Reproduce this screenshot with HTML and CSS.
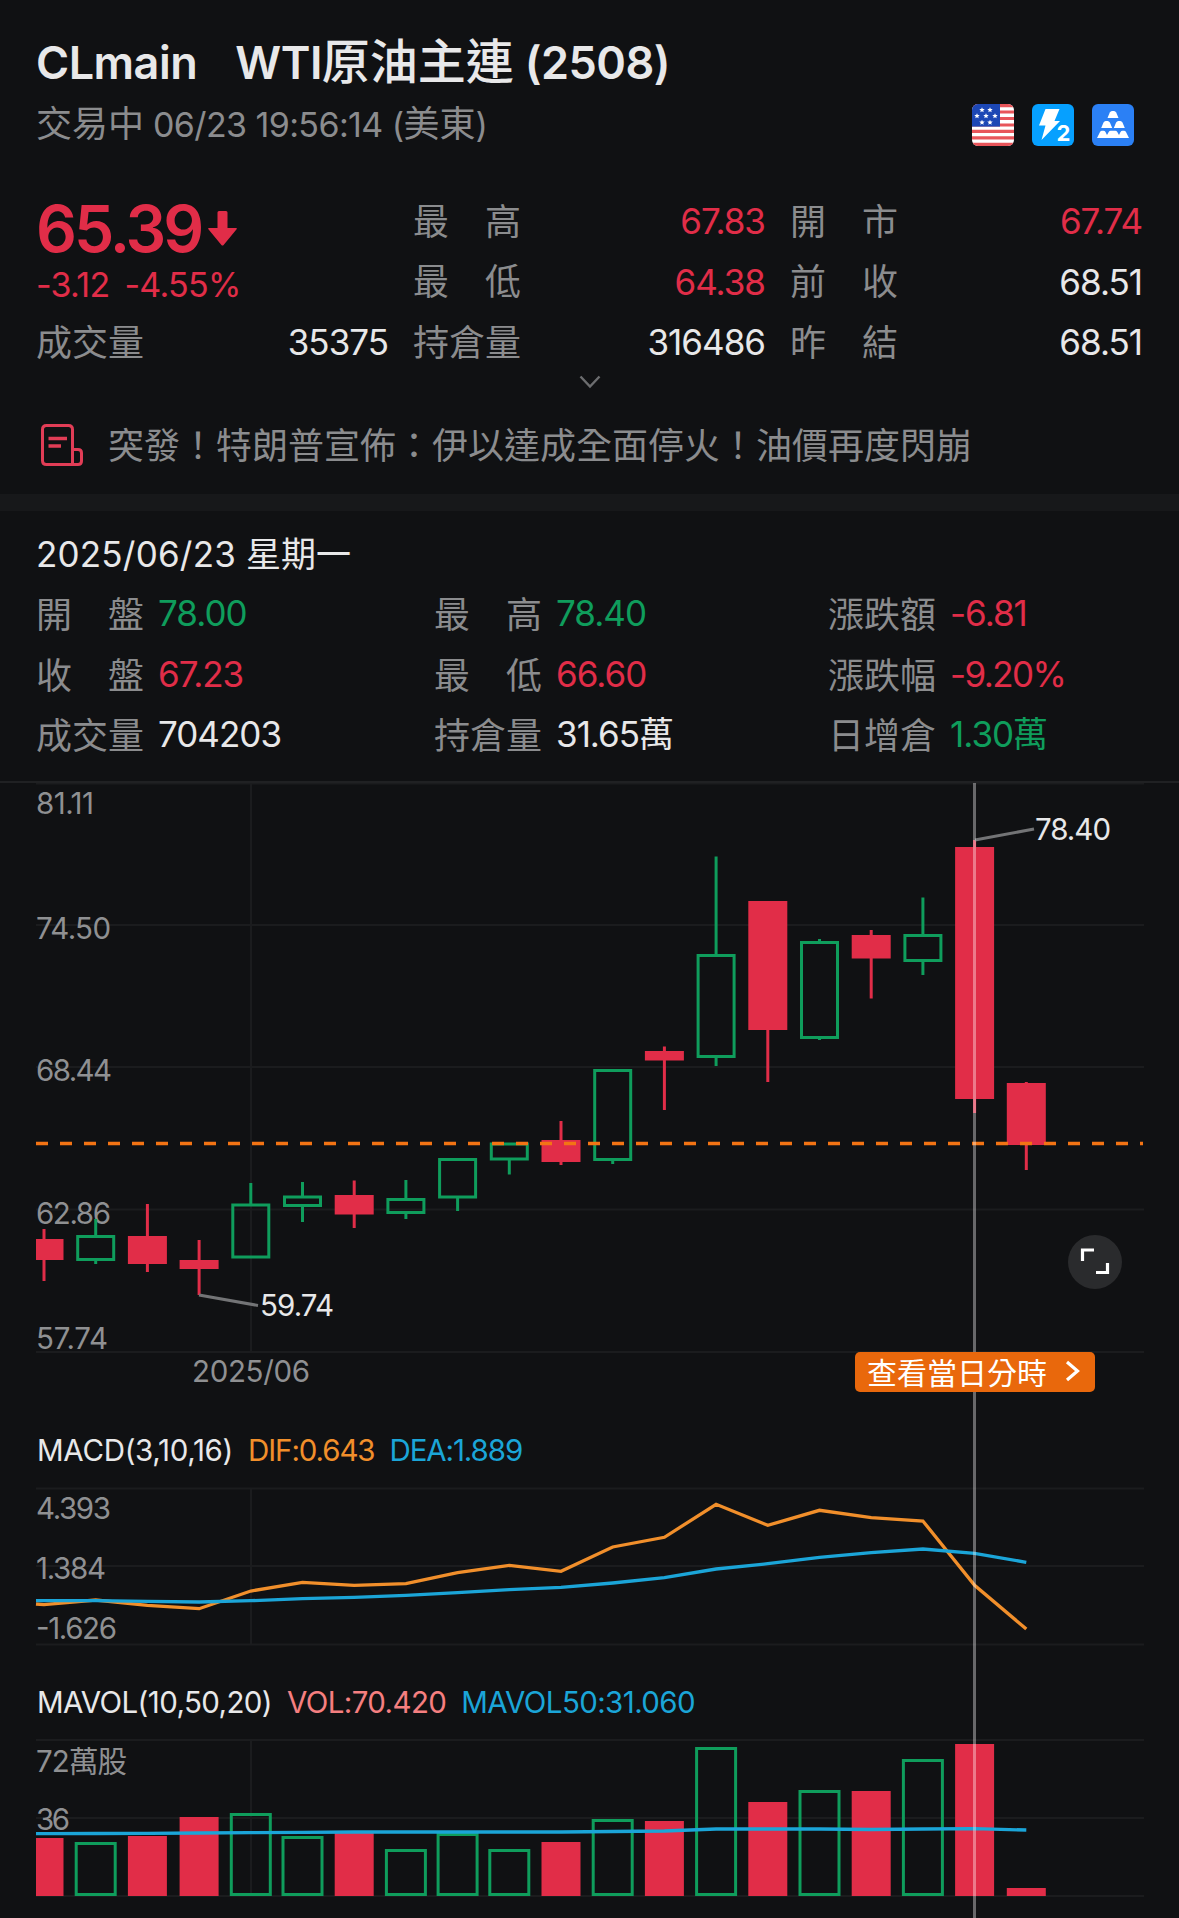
FILE: index.html
```html
<!DOCTYPE html>
<html lang="zh-Hant">
<head>
    <meta charset="UTF-8">
    <meta name="viewport" content="width=device-width, initial-scale=1.0">
    <title>CLmain WTI原油主連</title>
    <link rel="stylesheet" href="styles.css">
</head>
<body>

    <header>
        <h1><span>CLmain</span><span>WTI<b>原油主連</b> (2508)</span></h1>
        <div class="status">
            <p><b>交易中</b> 06/23 19:56:14 (<b>美東</b>)</p>
            <div class="badges">
                <svg viewBox="0 0 42 42">
                    <clipPath id="round"><rect width="42" height="42" rx="6"/></clipPath>
                    <g clip-path="url(#round)">
                        <rect width="42" height="42" fill="#fff"/>
                        <path d="M0 1.6h42M0 8h42M0 14.5h42M0 21h42M0 27.4h42M0 33.9h42M0 40.4h42" stroke="#e8555a" stroke-width="3.2"/>
                        <rect width="28" height="22.6" fill="#1c47b5"/>
                        <g id="stars" fill="#fff"></g>
                    </g>
                </svg>
                <svg viewBox="0 0 42 42">
                    <rect width="42" height="42" rx="6" fill="#06a0ff"/>
                    <path d="M13.5 5h14l-5 12h5.500L9.500 36l4-14.500H7z" fill="#fff"/>
                    <text x="24.500" y="37" class="lv2">2</text>
                </svg>
                <svg viewBox="0 0 42 42">
                    <rect width="42" height="42" rx="6" fill="#2b80f5"/>
                    <g fill="#fff">
                        <path d="M15.500 14l2.300-5.500q.8-1.500 2.200-1.500h2q1.400 0 2.200 1.500l2.300 5.500z"/>
                        <path d="M9.200 24l2.300-5.500q.8-1.500 2.200-1.500h2q1.400 0 2.200 1.500l2.300 5.500zM21.800 24l2.300-5.500q.8-1.500 2.200-1.500h2q1.400 0 2.200 1.500l2.300 5.500z"/>
                        <path d="M5 34l3-6q.7-1.300 2-1.300h1.500q1.300 0 2 1.300l1.500 3 1.700-3q.7-1.300 2-1.300h4.600q1.300 0 2 1.300l1.700 3 1.500-3q.7-1.300 2-1.300H32q1.300 0 2 1.300l3 6z"/>
                    </g>
                </svg>
            </div>
        </div>
    </header>

    <section class="quote">
        <div class="price">
            <div class="last">65.39
                <svg viewBox="0 0 29 36"><path d="M11 1h7q1.500 0 1.500 1.500V18H28q1.500 0 .6 1.300L15.600 35q-1.100 1-2.200 0L.4 19.300Q-.5 18 1 18h8.500V2.500Q9.500 1 11 1z" fill="#e12d48"/></svg>
            </div>
            <div class="change"><span>-3.12</span><span>-4.55%</span></div>
        </div>
        <div class="cell"><b>最　高</b><span class="red">67.83</span></div>
        <div class="cell"><b>開　市</b><span class="red">67.74</span></div>
        <div class="cell"><b>最　低</b><span class="red">64.38</span></div>
        <div class="cell"><b>前　收</b><span>68.51</span></div>
        <div class="cell"><b>成交量</b><span>35375</span></div>
        <div class="cell"><b>持倉量</b><span>316486</span></div>
        <div class="cell"><b>昨　結</b><span>68.51</span></div>
    </section>
    <div class="more">
        <svg viewBox="0 0 22 14"><path d="M1.500 1.500L11 11.500l9.500-10" fill="none" stroke="#6c6d6f" stroke-width="2.400"/></svg>
    </div>

    <div class="news">
        <svg viewBox="0 0 44 44" fill="none" stroke="#e23d56" stroke-width="3">
            <path d="M32.500 41.500H6.500q-4 0-4-4v-31q0-4 4-4h22q4 0 4 4z"/>
            <path d="M32.500 26.500H38q3.500 0 3.500 3.500v8q0 3.500-3.500 3.500h-5.500"/>
            <path d="M8.500 15.500H27M8.500 23H21" stroke-width="3.600"/>
        </svg>
        <b>突發！特朗普宣佈：伊以達成全面停火！油價再度閃崩</b>
    </div>

    <section class="detail">
        <h2>2025/06/23 <b>星期一</b></h2>
        <div class="grid">
            <div><b>開　盤</b><span class="green">78.00</span></div>
            <div><b>最　高</b><span class="green">78.40</span></div>
            <div><b>漲跌額</b><span class="red">-6.81</span></div>
            <div><b>收　盤</b><span class="red">67.23</span></div>
            <div><b>最　低</b><span class="red">66.60</span></div>
            <div><b>漲跌幅</b><span class="red percent">-9.20%</span></div>
            <div><b>成交量</b><span>704203</span></div>
            <div><b>持倉量</b><span>31.65<i>萬</i></span></div>
            <div><b>日增倉</b><span class="green">1.30<i>萬</i></span></div>
        </div>
    </section>

    <section class="charts">
        <svg id="kline" class="kline" viewBox="0 783 1179 637"></svg>
        <p class="legend macd-legend"><span>MACD(3,10,16)</span><span class="orange">DIF:0.643</span><span class="blue">DEA:1.889</span></p>
        <svg id="macd" class="macd" viewBox="0 1480 1179 180"></svg>
        <p class="legend vol-legend"><span>MAVOL(10,50,20)</span><span class="pink">VOL:70.420</span><span class="blue">MAVOL50:31.060</span></p>
        <svg id="vol" class="vol" viewBox="0 1732 1179 186"></svg>

        <div class="cross"></div>
        <button class="intraday">查看當日分時
            <svg viewBox="0 0 16 22"><path d="M2 2l10.500 9L2 20" fill="none" stroke="#fff" stroke-width="3.200"/></svg>
        </button>
        <button class="full">
            <svg viewBox="0 0 54 54"><path d="M14.500 26V15H26M28 37.500h11.500V28" fill="none" stroke="#fff" stroke-width="3.200"/></svg>
        </button>
    </section>

    <script>
        const RED = '#e12d48';
        const GREEN = '#0f9d5c';
        const xAt = i => 44 + i * 51.7;

        // one row per day: up/down, high, body top, body bottom, low
        const candles = [
            [0, 1229, 1239, 1260, 1281],
            [1, 1219, 1235, 1261, 1264],
            [0, 1204, 1236, 1264, 1272],
            [0, 1240, 1260, 1269, 1295],
            [1, 1183, 1203.500, 1258.500, 1258],
            [1, 1182, 1195.500, 1207, 1222],
            [0, 1180.500, 1195, 1214.500, 1228],
            [1, 1180, 1198, 1214, 1219],
            [1, 1159, 1158, 1198.500, 1211],
            [1, 1144, 1142.500, 1160.500, 1174.500],
            [0, 1121, 1140, 1162, 1165],
            [1, 1070, 1069, 1161, 1164],
            [0, 1046.500, 1051, 1060.500, 1110],
            [1, 856.500, 954, 1058, 1066],
            [0, 901, 901, 1030, 1082],
            [1, 939, 941, 1039, 1040],
            [0, 930, 935, 958.500, 998.500],
            [1, 897.500, 934, 962, 975],
            [0, 840, 847, 1099, 1113],
            [0, 1082, 1083, 1145, 1170]
        ];
        const volTop = [1838, 1842, 1836, 1817, 1813, 1836, 1832.500, 1849, 1833, 1849, 1842, 1819, 1821, 1747, 1802, 1790, 1791, 1759, 1744, 1888];
        const dif = [1604.700, 1600, 1605.300, 1608.700, 1591, 1582.300, 1585.300, 1583.700, 1572.700, 1565.300, 1571.300, 1547, 1537.300, 1504.300, 1525.300, 1510.300, 1517.700, 1521, 1585.300, 1629];
        const dea = [1600.700, 1600.700, 1601.300, 1602, 1600.700, 1598.700, 1597.300, 1595.300, 1592.700, 1589.700, 1587.300, 1583, 1577.700, 1569, 1563.700, 1557.300, 1552.700, 1549, 1553.300, 1562.300];
        const mavol = [1833.700, 1833.500, 1833.300, 1833, 1832.700, 1832.300, 1832, 1832, 1832, 1832, 1832, 1831.500, 1831, 1829, 1829, 1829, 1829.500, 1829, 1828.700, 1830];

        const line = (x1, y1, x2, y2, cls) => `<path d="M${x1} ${y1}L${x2} ${y2}" class="${cls}"/>`;
        const label = (text, x, y, w, cls = 'axis') => `<text x="${x}" y="${y}" textLength="${w}" class="${cls}">${text}</text>`;
        const curve = (ys, start, cls) => `<polyline points="36,${start} ${ys.map((y, i) => xAt(i) + ',' + y).join(' ')}" class="${cls}"/>`;

        // filled box for a down day, hollow one for an up day
        function box(i, up, top, bottom, width) {
            let x = xAt(i) - width / 2;
            if (up) {
                return `<rect x="${x + 1.5}" y="${top + 1.5}" width="${width - 3}" height="${bottom - top - 3}" fill="none" stroke="${GREEN}" stroke-width="3"/>`;
            }
            let left = Math.max(x, 36);
            return `<rect x="${left}" y="${top}" width="${x + width - left}" height="${bottom - top}" fill="${RED}"/>`;
        }

        // kline section
        let k = [783.5, 925, 1067, 1209.5, 1352].map(y => line(36, y, 1144, y, 'gridline')).join('');
        k += line(251, 783, 251, 1352, 'gridline');
        k += label('81.11', 36, 813.5, 58) + label('74.50', 36, 939, 75) + label('68.44', 36, 1081, 76);
        k += label('62.86', 36, 1223.5, 75) + label('57.74', 36, 1349, 72) + label('2025/06', 192, 1382, 118);
        candles.forEach(([up, high, top, bottom, low], i) => {
            let x = xAt(i);
            let color = up ? GREEN : RED;
            if (high < top) k += `<path d="M${x} ${high}V${top + 1}" stroke="${color}" stroke-width="3"/>`;
            if (low > bottom) k += `<path d="M${x} ${bottom - 1}V${low}" stroke="${color}" stroke-width="3"/>`;
            k += box(i, up, top, bottom, 39);
        });
        k += line(36, 1143.5, 1143, 1143.5, 'lastprice');
        k += line(975, 840, 1034, 829, 'leader') + line(199, 1295, 258, 1305.5, 'leader');
        k += label('78.40', 1035, 839.5, 76, 'mark') + label('59.74', 260, 1315.5, 74, 'mark');
        document.getElementById('kline').innerHTML = k;

        // macd section
        let m = [1488.5, 1566, 1644.5].map(y => line(36, y, 1144, y, 'gridline')).join('');
        m += line(251, 1488, 251, 1644, 'gridline');
        m += label('4.393', 36, 1518.5, 75) + label('1.384', 36, 1578.5, 70) + label('-1.626', 36, 1638.5, 81);
        m += curve(dif, 1604, 'curve dif') + curve(dea, 1600.7, 'curve dea');
        document.getElementById('macd').innerHTML = m;

        // volume section
        let v = [1740, 1818, 1896].map(y => line(36, y, 1144, y, 'gridline')).join('');
        v += line(251, 1740, 251, 1896, 'gridline');
        v += label('72萬股', 36, 1772, 91) + label('36', 36, 1830, 34);
        volTop.forEach((top, i) => {
            v += box(i, candles[i][0], top, 1896, candles[i][0] ? 42 : 39);
        });
        v += curve(mavol, 1833.7, 'curve dea');
        document.getElementById('vol').innerHTML = v;

        // flag stars
        const star = 'M0-2.800L.8-.9 2.700-.9 1.200.4 1.700 2.300 0 1.200-1.700 2.300-1.200.4-2.700-.9-.8-.9z';
        document.getElementById('stars').innerHTML = [[10, 6], [18, 6], [5, 12], [14, 12], [23, 12], [10, 18.5], [18, 18.5]]
            .map(([x, y]) => `<path d="${star}" transform="translate(${x} ${y})"/>`).join('');
    </script>
</body>
</html>
```

FILE: styles.css
```css
* {
    box-sizing: border-box;
}

body {
    margin: 0;
    width: 1179px;
    height: 1918px;
    overflow: hidden;
    background: #101113;
    color: #e8e8e9;
    font-family: Inter, "Noto Sans CJK TC", sans-serif;
    font-size: 35px;
    letter-spacing: -1px;
}

h1, h2, p {
    margin: 0;
    font-weight: 400;
}

b, i {
    font-family: "Noto Sans CJK TC", sans-serif;
    font-weight: 400;
    font-style: normal;
    font-size: 36px;
    letter-spacing: 0;
}

svg {
    display: block;
}

.red { color: #e12d48; }
.green { color: #0f9d5c; }
.orange { color: #f18f2b; }
.blue { color: #1ba5d8; }
.pink { color: #f57f80; }

header {
    height: 190px;
    padding: 31px 45px 0 36px;
}

h1 {
    display: flex;
    gap: 38px;
    height: 63px;
    line-height: 64px;
    font-size: 45px;
    font-weight: 600;
    white-space: pre;
    letter-spacing: -0.5px;
}

h1 b {
    font-size: 48px;
    font-weight: 500;
    line-height: 1;
}

.status {
    display: flex;
    justify-content: space-between;
    align-items: center;
    height: 62px;
    color: #8b8c8e;
    font-size: 34px;
    letter-spacing: -0.6px;
}

.status p {
    line-height: 62px;
}

.status b {
    line-height: 1;
}

.badges {
    display: flex;
    gap: 18px;
}

.badges svg {
    width: 42px;
    height: 42px;
}

.lv2 {
    font-size: 22px;
    font-weight: 700;
    fill: #fff;
}

/* top quote */

.quote {
    display: grid;
    grid-template-columns: repeat(3, 352px);
    grid-auto-rows: 60.5px;
    column-gap: 25px;
    padding: 0 36px;
}

.price {
    grid-row: span 2;
    color: #e12d48;
}

.last {
    display: flex;
    align-items: center;
    gap: 7px;
    height: 76px;
    font-size: 64px;
    font-weight: 600;
    letter-spacing: -3px;
}

.last svg {
    width: 29px;
    height: 36px;
}

.change {
    display: flex;
    gap: 15px;
    line-height: 37px;
    font-size: 34px;
    letter-spacing: -0.7px;
}

.cell {
    display: flex;
    justify-content: space-between;
    align-items: center;
}

.cell b, .grid b, .news b {
    color: #8b8c8e;
}

.cell b, .grid b {
    margin-top: -3px;
}

.cell span {
    padding-top: 2px;
}

.more {
    display: flex;
    justify-content: center;
    height: 24px;
    padding-top: 3px;
}

.more svg {
    width: 22px;
    height: 14px;
}

.news {
    display: flex;
    align-items: center;
    gap: 24px;
    height: 98px;
    padding-left: 40px;
}

.news svg {
    width: 44px;
    height: 44px;
}

.news b {
    margin-top: -4px;
}

/* selected day */

.detail {
    height: 289px;
    padding: 13px 36px 0;
    border-top: 17px solid #17181a;
    border-bottom: 2px solid #202123;
}

h2 {
    height: 60px;
    line-height: 60px;
    font-size: 35px;
    letter-spacing: 0.2px;
}

h2 b {
    font-size: 35px;
    line-height: 1;
}

.grid {
    display: grid;
    grid-template-columns: 398px 394px 1fr;
    grid-auto-rows: 60.5px;
}

.grid div {
    display: flex;
    align-items: center;
    gap: 14px;
}

.grid span {
    margin-top: -1px;
}

.grid .percent {
    letter-spacing: -1.6px;
}

.grid i {
    font-size: 35px;
    line-height: 1;
}

/* charts */

.charts {
    position: relative;
}

.charts > svg {
    width: 1179px;
}

.kline { height: 637px; }
.macd { height: 180px; }
.vol { height: 186px; }

.gridline {
    stroke: #1b1c1e;
    stroke-width: 2;
}

.axis, .mark {
    font-size: 29.5px;
    fill: #8f9092;
    letter-spacing: 0;
}

.mark {
    fill: #e8e8e9;
}

.leader {
    stroke: #737476;
    stroke-width: 3;
}

.lastprice {
    stroke: #f37414;
    stroke-width: 3.5;
    stroke-dasharray: 12 12;
}

.curve {
    fill: none;
    stroke-width: 3.3;
}

.dif { stroke: #f18f2b; }
.dea { stroke: #1ba5d8; }

.legend {
    display: flex;
    gap: 15px;
    padding-left: 37px;
    font-size: 29.5px;
    letter-spacing: -0.6px;
}

.macd-legend {
    height: 60px;
    line-height: 60px;
    letter-spacing: -1.1px;
}

.macd-legend span:first-child {
    letter-spacing: -0.3px;
}

.vol-legend {
    height: 72px;
    line-height: 84px;
}

.cross {
    position: absolute;
    left: 973px;
    top: 0;
    width: 3px;
    height: 1135px;
    background: rgba(255, 255, 255, 0.37);
}

button {
    border: 0;
    padding: 0;
    color: #fff;
}

.intraday {
    position: absolute;
    left: 855px;
    top: 569px;
    width: 240px;
    height: 40px;
    padding: 0 0 2px 12px;
    display: flex;
    align-items: center;
    gap: 18px;
    border-radius: 5px;
    background: #e9680c;
    font: 400 30px "Noto Sans CJK TC", sans-serif;
    white-space: nowrap;
}

.intraday svg {
    width: 16px;
    height: 22px;
}

.full {
    position: absolute;
    left: 1068px;
    top: 452px;
    width: 54px;
    height: 54px;
    border-radius: 50%;
    background: #2a2b2d;
}
```
